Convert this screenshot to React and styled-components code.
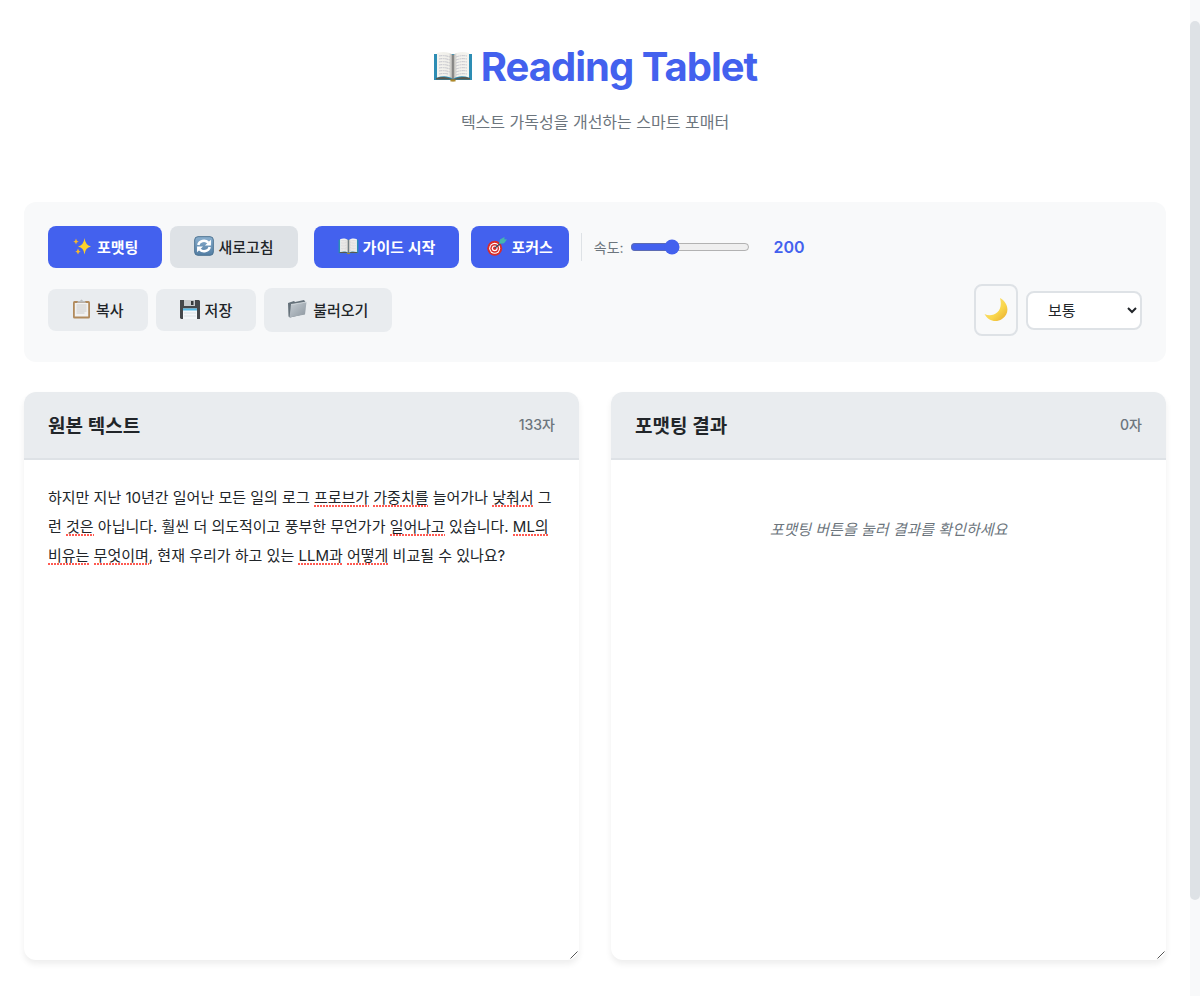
import React, { useLayoutEffect, useRef, useState } from 'react';
import styled, { createGlobalStyle } from 'styled-components';

const Global = createGlobalStyle`
  * { box-sizing: border-box; }
  body {
    margin: 0;
    background: #fff;
    color: #212529;
    font-family: Inter, "Noto Sans CJK KR", sans-serif;
    font-size: 15px;
  }
  button, select, textarea { font: inherit; color: inherit; }
`;

const Page = styled.div`
  padding: 24px 34px 35px 24px;
`;

const Header = styled.header`
  display: flex;
  flex-direction: column;
  align-items: center;
  gap: 16px;
  padding-top: 17px;
  padding-bottom: 67px;
`;

const Title = styled.h1`
  display: flex;
  align-items: center;
  gap: 8px;
  margin: 0;
  color: #4361ee;
  font-size: 40px;
  line-height: 52px;
  font-weight: 700;
  letter-spacing: -1px;
`;

const Subtitle = styled.p`
  margin: 0;
  color: #6c757d;
  font-size: 16px;
  line-height: 26px;
`;

const Toolbar = styled.section`
  display: flex;
  flex-direction: column;
  gap: 16px;
  padding: 24px 24px 26px;
  margin-bottom: 30px;
  border-radius: 12px;
  background: #f8f9fa;
`;

const ToolRow = styled.div`
  display: flex;
  align-items: center;
  flex-wrap: wrap;
  gap: ${(p) => p.$gap}px;
`;

const Spacer = styled.div`
  flex: 1;
`;

const tones = {
  primary: { bg: '#4361ee', fg: '#fff', weight: 600 },
  muted: { bg: '#dee2e6', fg: '#212529', weight: 500 },
  plain: { bg: '#e9ecef', fg: '#212529', weight: 500 },
};

const Button = styled.button`
  display: inline-flex;
  align-items: center;
  justify-content: center;
  gap: 4px;
  height: ${(p) => (p.$tall ? 44 : 42)}px;
  padding: 0 ${(p) => (p.$compact ? 16 : 24)}px 2px;
  border: 0;
  border-radius: 8px;
  cursor: pointer;
  white-space: nowrap;
  background: ${(p) => tones[p.$tone].bg};
  color: ${(p) => tones[p.$tone].fg};
  font-weight: ${(p) => tones[p.$tone].weight};
`;

const Group = styled.div`
  display: flex;
  align-items: center;
  gap: ${(p) => p.$gap}px;
`;

const SpeedGroup = styled.div`
  display: flex;
  align-items: center;
  height: 28px;
  padding-left: 12px;
  border-left: 1px solid #dee2e6;
`;

const SpeedLabel = styled.label`
  margin-right: 6px;
  color: #6c757d;
  font-size: 14px;
`;

const Slider = styled.input`
  width: 120px;
  height: 16px;
  margin: 0 24px 0 0;
  accent-color: #4361ee;
`;

const SpeedValue = styled.output`
  color: #4361ee;
  font-size: 16px;
  font-weight: 600;
`;

const ThemeButton = styled.button`
  display: grid;
  place-items: center;
  width: 44px;
  height: 52px;
  padding: 0;
  border: 2px solid #dee2e6;
  border-radius: 8px;
  background: transparent;
  cursor: pointer;
`;

const SizeSelect = styled.select`
  width: 116px;
  height: 39px;
  padding: 0 0 0 16px;
  border: 2px solid #dee2e6;
  border-radius: 8px;
  background: #fff;
`;

const Panels = styled.main`
  display: grid;
  grid-template-columns: 1fr 1fr;
  gap: 32px;
`;

const Panel = styled.section`
  display: flex;
  flex-direction: column;
  overflow: hidden;
  border-radius: 12px;
  background: #fff;
  box-shadow: 0 4px 6px rgba(0, 0, 0, 0.07);
`;

const PanelHead = styled.div`
  display: flex;
  align-items: center;
  justify-content: space-between;
  padding: 0 24px 2px;
  height: 68px;
  border-bottom: 2px solid #dee2e6;
  background: #e9ecef;
`;

const PanelTitle = styled.h2`
  margin: 0;
  font-size: 19px;
  font-weight: 600;
`;

const Count = styled.span`
  color: #6c757d;
  font-size: 14px;
  font-weight: 500;
`;

const Editor = styled.div`
  position: relative;
  display: grid;
  min-height: 500px;
  font-size: 15px;
  line-height: 29px;

  & > * { grid-area: 1 / 1; }
`;

const SpellMark = styled.span`
  position: absolute;
  height: 2px;
  pointer-events: none;
  background: repeating-linear-gradient(90deg, #ff5a52 0 2px, transparent 2px 3px);
`;

const TextBox = styled.textarea`
  display: block;
  width: 100%;
  height: 100%;
  padding: 23px 24px;
  border: 0;
  outline: 0;
  background: transparent;
  line-height: inherit;
  overflow: hidden;
  resize: none;
`;

const ResultBody = styled.div`
  display: grid;

  & > * { grid-area: 1 / 1; }
`;

const Result = styled.div`
  min-height: 500px;
  padding: 55px 24px;
`;

const Placeholder = styled.p`
  margin: 0;
  color: #6c757d;
  font-style: italic;
  line-height: 29px;
  text-align: center;
`;

const Grip = styled.svg`
  align-self: end;
  justify-self: end;
  pointer-events: none;
`;

const Rail = styled.div`
  position: fixed;
  top: 0;
  right: 0;
  bottom: 0;
  width: 10px;
  padding-top: 21px;
  background: #f8f9fa;
`;

const Thumb = styled.div`
  height: 90.2%;
  border-radius: 5px;
  background: #dee2e6;
`;

function Book({ size }) {
  return (
    <svg width={size} height={size} viewBox="0 0 40 40" aria-hidden="true">
      <defs>
        <linearGradient id="pageL" x1="0" x2="1">
          <stop offset="0" stopColor="#f5f4ef" />
          <stop offset=".75" stopColor="#efeee9" />
          <stop offset="1" stopColor="#9b9a98" />
        </linearGradient>
        <linearGradient id="pageR" x1="1" x2="0">
          <stop offset="0" stopColor="#f5f4ef" />
          <stop offset=".75" stopColor="#f2f1ec" />
          <stop offset="1" stopColor="#a5a4a1" />
        </linearGradient>
      </defs>
      <path d="M1 7h38v26H23l-3 1-3-1H1z" fill="#2d8db4" />
      <path d="M3 31c6-2 12-1 17 1.500 5-2.500 11-3.500 17-1.500v1.500H23l-3 2-3-2H3z" fill="#5a584d" />
      <path d="M4 6c6-2 12-1 16 2v24c-4-3-10-3.500-16-1.500z" fill="url(#pageL)" />
      <path d="M36 6c-6-2-12-1-16 2v24c4-3 10-3.500 16-1.500z" fill="url(#pageR)" />
      <path d="M20 8v24" stroke="#666" />
      <path d="M17.500 32.500h5v2h-5z" fill="#b18a28" />
      <g stroke="#c0bfc8" strokeWidth=".9" fill="none" strokeDasharray="3 .6 2 .5">
        <path d="M6 9q6-1 11 1M6 12q6-1 11 1M6 15q6-1 11 1M6 18q6-1 11 1M6 21q6-1 11 1M6 24q6-1 11 1M6 27q6-1 9 0" />
        <path d="M23 10q5-2 11-1M23 13q5-2 11-1M23 16q5-2 11-1M23 19q5-2 11-1M23 22q5-2 11-1M23 25q5-2 11-1M23 28q5-2 11-1" />
      </g>
    </svg>
  );
}

const Sparkles = () => (
  <svg width="21" height="20" viewBox="0 0 21 20" aria-hidden="true">
    <path d="M12.500 2q.7 7 6.500 8.500-5.800 1-6.500 8-.7-7-6.500-8Q11.800 9 12.500 2z" fill="#fbd22c" />
    <path d="M4 2.500q.3 2.700 2.700 3.100-2.400.4-2.700 3-.3-2.600-2.700-3Q3.700 5.200 4 2.500zM6 12.500q.4 2.700 2.700 3-2.300.3-2.700 3-.4-2.700-2.700-3 2.300-.3 2.700-3z" fill="#f9b92b" />
  </svg>
);

const Refresh = () => (
  <svg width="20" height="20" viewBox="0 0 21 21" aria-hidden="true">
    <defs>
      <linearGradient id="tile" y2="1" x2="0">
        <stop stopColor="#8bb0cf" />
        <stop offset="1" stopColor="#527da3" />
      </linearGradient>
    </defs>
    <rect x=".7" y=".7" width="19.600" height="19.600" rx="3.500" fill="url(#tile)" stroke="#49708f" />
    <g fill="none" stroke="#fff" strokeWidth="2.600">
      <path d="M4.500 9.500A6 5.500 0 0 1 15 7" />
      <path d="M16.500 11.500A6 5.500 0 0 1 6 14" />
    </g>
    <path d="M17.800 4v6h-6.300zM3.200 17v-6h6.300z" fill="#fff" />
  </svg>
);

const Target = () => (
  <svg width="20" height="20" viewBox="0 0 20 20" aria-hidden="true">
    <circle cx="7.700" cy="12.300" r="7.500" fill="#d92c2b" />
    <circle cx="7.700" cy="12.300" r="5.500" fill="#fff" />
    <circle cx="7.700" cy="12.300" r="4.400" fill="#d92c2b" />
    <circle cx="7.700" cy="12.300" r="2.900" fill="#fff" />
    <circle cx="7.700" cy="12.300" r="1.700" fill="#d92c2b" />
    <path d="M8 12l8-7" stroke="#334f64" strokeWidth="1.200" />
    <path d="M12 8l1-4.500L17.500 1l-.2 2.300 2.700.2-3 3.700z" fill="#45b5ae" />
  </svg>
);

const Clipboard = () => (
  <svg width="20" height="20" viewBox="0 0 20 20" aria-hidden="true">
    <rect x="1" y="2" width="17" height="17.500" rx="1.500" fill="#b18a5c" />
    <path d="M2.800 4h13.400v13.500H2.800z" fill="#f1f1f1" />
    <path d="M4.500 6h10M4.500 8h10M4.500 10h10M4.500 12h10M4.500 14h8" stroke="#ccc" />
    <path d="M5 3.800l1-1.800h2q1.500-3 3 0h2l1 1.800z" fill="#babcbe" />
  </svg>
);

const Floppy = () => (
  <svg width="21" height="21" viewBox="0 0 21 21" aria-hidden="true">
    <path d="M0 1h19l1 1v18H1l-1-1z" fill="#45484c" />
    <path d="M4 1h11v6H4z" fill="#c8cbce" />
    <path d="M11 2h2.500v4H11z" fill="#36393c" />
    <path d="M3 9.500h14V20H3z" fill="#f4f7fa" />
    <path d="M3 9.500h14v2H3z" fill="#54b9e6" />
    <path d="M4 14h12M4 17h12" stroke="#dce1e5" />
  </svg>
);

const Folder = () => (
  <svg width="21" height="20" viewBox="0 0 21 20" aria-hidden="true">
    <defs>
      <linearGradient id="folder" x2="1" y2="1">
        <stop stopColor="#c7ced4" />
        <stop offset="1" stopColor="#8c969f" />
      </linearGradient>
    </defs>
    <path d="M0 4l6-2 1 1 9-2 1.500 2-1 12L2 18.500l-1.500-1z" fill="#65717a" />
    <path d="M3 5.500L18.500 3 17 15.500 1.500 18.500z" fill="url(#folder)" />
    <path d="M3 5.500L18.500 3" stroke="#e8ecef" strokeWidth=".7" />
  </svg>
);

const Moon = () => (
  <svg width="24" height="26" viewBox="0 0 24 26" aria-hidden="true">
    <defs>
      <linearGradient id="moon" x2="1" y2="1">
        <stop stopColor="#f9e58b" />
        <stop offset=".6" stopColor="#f9d64b" />
        <stop offset="1" stopColor="#e7a92d" />
      </linearGradient>
    </defs>
    <path d="M16 1c9 5 10 16 2 21-6 4-14 2-17.500-5C8 21 20 16 16 1z" fill="url(#moon)" />
  </svg>
);

const ResizeGrip = () => (
  <Grip width="10" height="10" viewBox="0 0 10 10" aria-hidden="true">
    <path d="M1.500 8.500l7-7" stroke="#555" strokeWidth="1" />
  </Grip>
);

const initialText =
  '하지만 지난 10년간 일어난 모든 일의 로그 프로브가 가중치를 늘어가나 낮춰서 그런 것은 아닙니다. ' +
  '훨씬 더 의도적이고 풍부한 무언가가 일어나고 있습니다. ML의 비유는 무엇이며, ' +
  '현재 우리가 하고 있는 LLM과 어떻게 비교될 수 있나요?';

const flagged = ['프로브가', '가중치를', '낮춰서', '것은', '일어나고', 'ML의', '비유는', '무엇이며', 'LLM과', '어떻게'];

// Lays the text out in a short-lived copy of the textarea to find where each flagged word falls.
function measureMarks(box, text) {
  const css = getComputedStyle(box);
  const copy = document.createElement('div');
  for (const key of ['font', 'lineHeight', 'padding', 'boxSizing']) copy.style[key] = css[key];
  Object.assign(copy.style, {
    position: 'absolute', top: '0', left: '0', width: `${box.offsetWidth}px`,
    visibility: 'hidden', whiteSpace: 'pre-wrap', overflowWrap: 'break-word',
  });
  const node = document.createTextNode(text);
  copy.appendChild(node);
  document.body.appendChild(copy);
  const base = copy.getBoundingClientRect();
  const marks = [];
  for (const word of flagged) {
    const at = text.indexOf(word);
    if (at < 0) continue;
    const range = document.createRange();
    range.setStart(node, at);
    range.setEnd(node, at + word.length);
    const lines = new Map();
    for (const r of range.getClientRects()) {
      const row = Math.floor((r.top + r.height / 2 - base.top - 23) / 29);
      const line = lines.get(row) || { left: Infinity, right: 0 };
      line.left = Math.min(line.left, r.left - base.left);
      line.right = Math.max(line.right, r.right - base.left);
      lines.set(row, line);
    }
    lines.forEach((l, row) => marks.push({
      left: Math.round(l.left), width: Math.round(l.right - l.left), top: 23 + row * 29 + 22,
    }));
  }
  copy.remove();
  return marks;
}

function SourceEditor({ labelledBy, text, onChange }) {
  const box = useRef(null);
  const [marks, setMarks] = useState([]);

  useLayoutEffect(() => {
    const update = () => setMarks(measureMarks(box.current, text));
    update();
    window.addEventListener('resize', update);
    return () => window.removeEventListener('resize', update);
  }, [text]);

  return (
    <Editor>
      <TextBox ref={box} aria-labelledby={labelledBy} spellCheck={false} value={text}
        onChange={(e) => onChange(e.target.value)} />
      {marks.map((m, i) => <SpellMark key={i} style={m} />)}
      <ResizeGrip />
    </Editor>
  );
}

export default function App() {
  const [text, setText] = useState(initialText);
  const [speed, setSpeed] = useState(200);

  return (
    <>
      <Global />
      <Page>
        <Header>
          <Title><Book size={40} />Reading Tablet</Title>
          <Subtitle>텍스트 가독성을 개선하는 스마트 포매터</Subtitle>
        </Header>

        <Toolbar>
          <ToolRow $gap={12}>
            <Group $gap={16}>
              <Group $gap={8}>
                <Button $tone="primary"><Sparkles />포맷팅</Button>
                <Button $tone="muted"><Refresh />새로고침</Button>
              </Group>
              <Button $tone="primary"><Book size={21} />가이드 시작</Button>
            </Group>
            <Button $tone="primary" $compact><Target />포커스</Button>
            <SpeedGroup>
              <SpeedLabel htmlFor="speed">속도:</SpeedLabel>
              <Slider id="speed" type="range" min="50" max="500" value={speed}
                onChange={(e) => setSpeed(Number(e.target.value))} />
              <SpeedValue htmlFor="speed">{speed}</SpeedValue>
            </SpeedGroup>
          </ToolRow>
          <ToolRow $gap={8}>
            <Button $tone="plain"><Clipboard />복사</Button>
            <Button $tone="plain"><Floppy />저장</Button>
            <Button $tone="plain" $tall><Folder />불러오기</Button>
            <Spacer />
            <ThemeButton aria-label="다크 모드"><Moon /></ThemeButton>
            <SizeSelect aria-label="글자 크기" defaultValue="보통">
              <option>작게</option>
              <option>보통</option>
              <option>크게</option>
            </SizeSelect>
          </ToolRow>
        </Toolbar>

        <Panels>
          <Panel>
            <PanelHead>
              <PanelTitle id="source-title">원본 텍스트</PanelTitle>
              <Count>133자</Count>
            </PanelHead>
            <SourceEditor labelledBy="source-title" text={text} onChange={setText} />
          </Panel>
          <Panel>
            <PanelHead>
              <PanelTitle>포맷팅 결과</PanelTitle>
              <Count>0자</Count>
            </PanelHead>
            <ResultBody>
              <Result><Placeholder>포맷팅 버튼을 눌러 결과를 확인하세요</Placeholder></Result>
              <ResizeGrip />
            </ResultBody>
          </Panel>
        </Panels>
      </Page>
      <Rail aria-hidden="true"><Thumb /></Rail>
    </>
  );
}
